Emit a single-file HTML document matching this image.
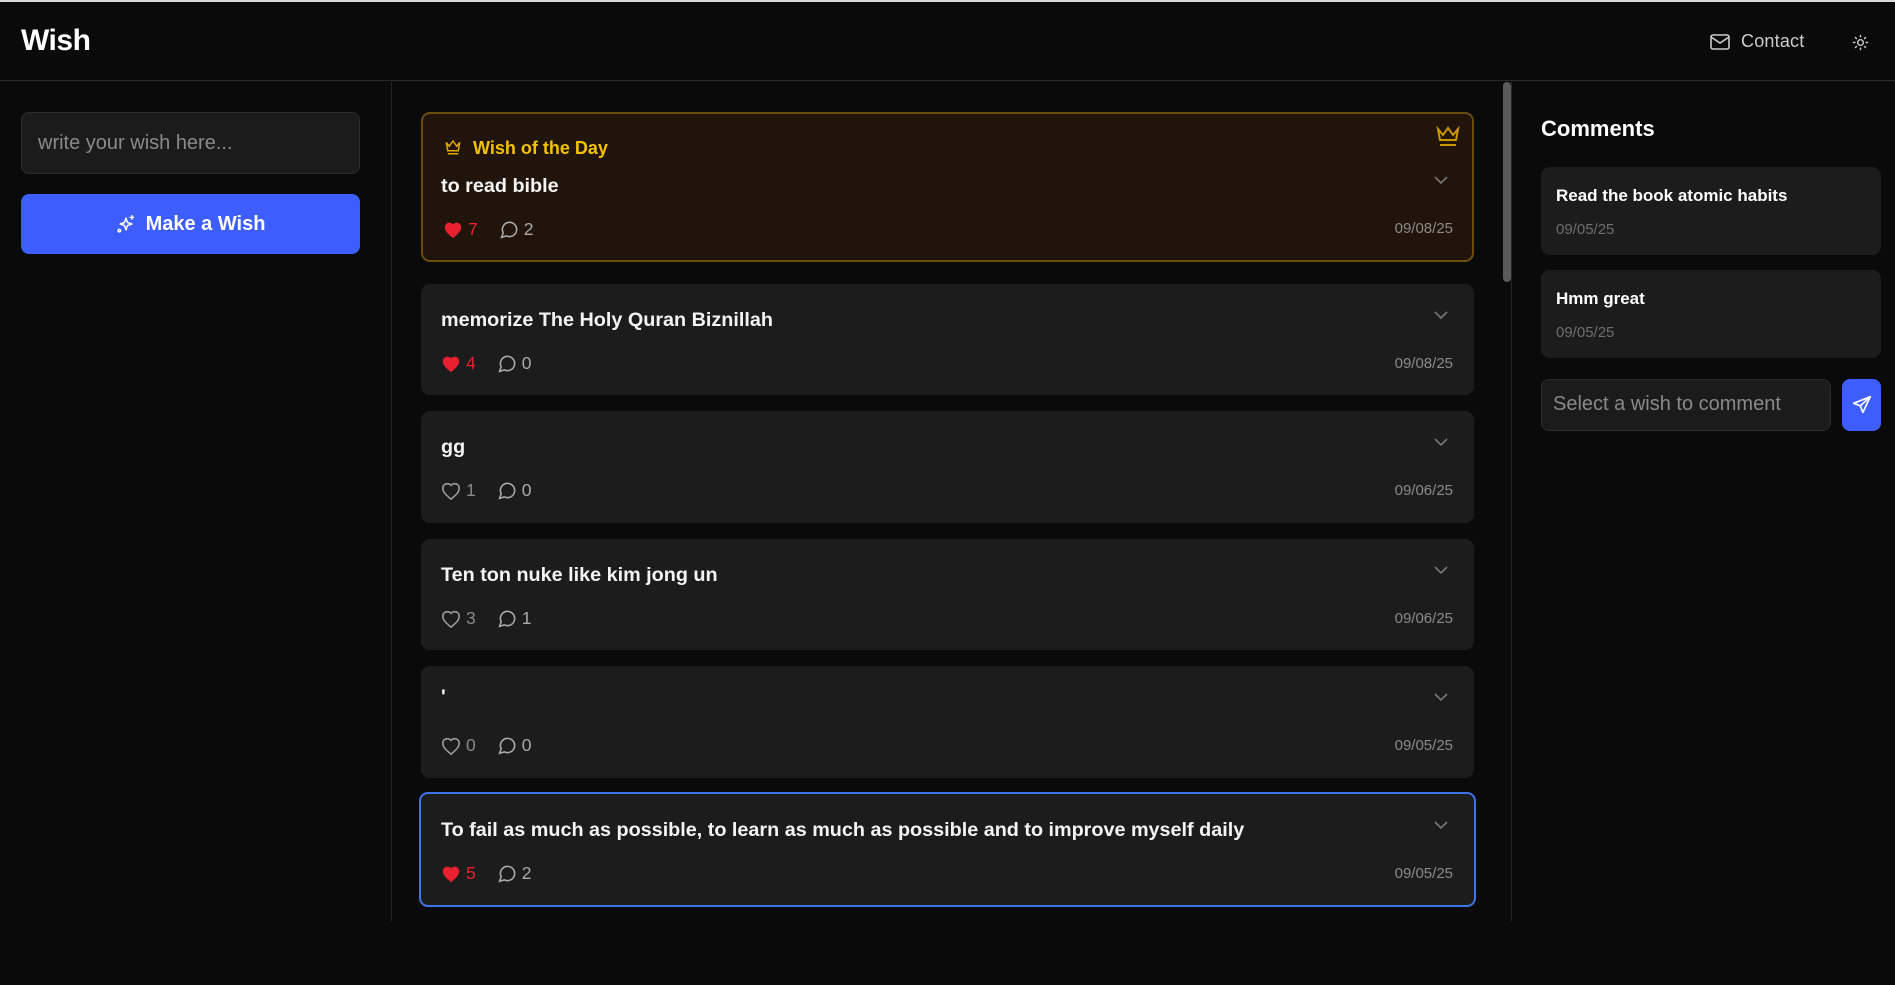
<!DOCTYPE html>
<html><head><meta charset="utf-8"><style>
*{box-sizing:border-box;margin:0;padding:0}
body{width:1895px;height:985px;background:#0a0a0a;font-family:"Liberation Sans",sans-serif;color:#fff;position:relative;overflow:hidden}
.top{position:absolute;left:0;top:0;width:1895px;height:2px;background:#d8d8d8}
.hdr{position:absolute;left:0;top:2px;width:1895px;height:79px;border-bottom:1px solid #2a2a2a}
.logo{position:absolute;left:21px;top:22px;font-size:30px;font-weight:bold;letter-spacing:-0.5px}
.contact{position:absolute;left:1710px;top:29px;font-size:18px;color:#ccc;display:flex;align-items:center;gap:11px;letter-spacing:0.2px}
.vl{position:absolute;top:82px;height:839px;width:1px;background:#262626}
.inp{position:absolute;left:21px;top:112px;width:339px;height:62px;background:#1b1b1b;border:1px solid #2c2c2c;border-radius:8px;color:#8a8a8a;font-size:20px;padding:19px 16px}
.btn{position:absolute;left:21px;top:194px;width:339px;height:60px;background:#3d5efc;border-radius:8px;font-size:20px;font-weight:bold;display:flex;align-items:center;justify-content:center;gap:10px}
.card{position:absolute;left:421px;width:1053px;background:#1c1c1c;border-radius:9px}
.t{position:absolute;left:20px;font-size:19.8px;font-weight:bold;color:#f4f4f4}
.meta{position:absolute;left:20px;display:flex;align-items:center;font-size:17.5px;gap:5px}
.date{position:absolute;right:21px;font-size:15px;color:#8a8a8a}
.chev{position:absolute;right:26px}
.red{color:#e8202f}.gr{color:#aaa}
.sb{position:absolute;left:1503px;top:82px;width:8px;height:200px;background:#5a5a5a;border-radius:4px}
.ch{position:absolute;left:1541px;width:340px;background:#1c1c1c;border-radius:9px}
.ch .a{position:absolute;left:15px;top:19px;font-size:17px;font-weight:bold}
.ch .b{position:absolute;left:15px;top:54px;font-size:15px;color:#6e6e6e}
</style></head><body>
<div class="top"></div>
<div class="hdr">
<div class="logo">Wish</div>
<div class="contact"><svg width="20" height="16" viewBox="0 0 20 16" fill="none" stroke="#ccc" stroke-width="1.6"><rect x="1" y="1" width="18" height="14" rx="2"/><path d="M1 3l9 6 9-6"/></svg>Contact</div>
<svg style="position:absolute;left:1852px;top:32px" width="17" height="17" viewBox="0 0 24 24" fill="none" stroke="#ccc" stroke-width="2" stroke-linecap="round"><circle cx="12" cy="12" r="4"/><path d="M12 2v2M12 20v2M4.9 4.9l1.4 1.4M17.7 17.7l1.4 1.4M2 12h2M20 12h2M4.9 19.1l1.4-1.4M17.7 6.3l1.4-1.4"/></svg>
</div>
<div class="vl" style="left:391px"></div>
<div class="vl" style="left:1511px"></div>
<div class="sb"></div>
<div class="inp">write your wish here...</div>
<div class="btn"><svg width="20" height="20" viewBox="0 0 24 24" fill="none" stroke="#fff" stroke-width="1.8" stroke-linecap="round" stroke-linejoin="round"><path d="M12 5l1.8 5.2L19 12l-5.2 1.8L12 19l-1.8-5.2L5 12l5.2-1.8z"/><path d="M19 2v4M17 4h4"/><circle cx="4" cy="20" r="1.5"/></svg>Make a Wish</div>

<div class="card" style="top:112px;height:150px;background:#21140b;border:2px solid #6a4c0c">
<svg style="position:absolute;left:21px;top:24px" width="18" height="18" viewBox="0 0 24 24" fill="none" stroke="#e0a800" stroke-width="2"><path d="M3 6l4 5 5-7 5 7 4-5-2 11H5z"/><path d="M5 21h14"/></svg>
<div style="position:absolute;left:50px;top:24px;font-size:18px;font-weight:bold;color:#f2c200">Wish of the Day</div>
<svg style="position:absolute;right:12px;top:12px" width="24" height="22" viewBox="0 0 24 22" fill="none" stroke="#c99700" stroke-width="2"><path d="M2 3l5 6 5-7 5 7 5-6-2 11H4z"/><path d="M4 19h16"/></svg>
<div class="t" style="top:61px;left:18px">to read bible</div>
<svg class="chev" style="top:62px;right:24px" width="14" height="9" viewBox="0 0 14 9" fill="none" stroke="#777" stroke-width="1.6"><path d="M1 1l6 6 6-6"/></svg>
<div class="meta" style="top:105px;left:20px"><svg width="20" height="18" viewBox="0 0 24 22"><path fill="#e8202f" d="M12 21l-1.5-1.3C5 15 2 12 2 7.5 2 4.4 4.4 2 7.5 2c1.7 0 3.4.8 4.5 2.1C13.1 2.8 14.8 2 16.5 2 19.6 2 22 4.4 22 7.5c0 4.5-3 7.5-8.5 12.2z"/></svg><span class="red">7</span><span style="width:12px"></span><svg width="19" height="19" viewBox="0 0 24 24" fill="none" stroke="#aaa" stroke-width="2"><path d="M7.9 20A9 9 0 1 0 4 16.1L2 22z"/></svg><span class="gr">2</span></div>
<div class="date" style="top:106px;right:19px">09/08/25</div>
</div>

<div class="card" style="top:284px;height:111px">
<div class="t" style="top:25px">memorize The Holy Quran Biznillah</div>
<svg class="chev" style="top:27px" width="14" height="9" viewBox="0 0 14 9" fill="none" stroke="#777" stroke-width="1.6"><path d="M1 1l6 6 6-6"/></svg>
<div class="meta" style="top:69px"><svg width="20" height="18" viewBox="0 0 24 22"><path fill="#e8202f" d="M12 21l-1.5-1.3C5 15 2 12 2 7.5 2 4.4 4.4 2 7.5 2c1.7 0 3.4.8 4.5 2.1C13.1 2.8 14.8 2 16.5 2 19.6 2 22 4.4 22 7.5c0 4.5-3 7.5-8.5 12.2z"/></svg><span class="red">4</span><span style="width:12px"></span><svg width="19" height="19" viewBox="0 0 24 24" fill="none" stroke="#aaa" stroke-width="2"><path d="M7.9 20A9 9 0 1 0 4 16.1L2 22z"/></svg><span class="gr">0</span></div>
<div class="date" style="top:71px">09/08/25</div>
</div>

<div class="card" style="top:411px;height:112px">
<div class="t" style="top:25px">gg</div>
<svg class="chev" style="top:27px" width="14" height="9" viewBox="0 0 14 9" fill="none" stroke="#777" stroke-width="1.6"><path d="M1 1l6 6 6-6"/></svg>
<div class="meta" style="top:69px"><svg width="20" height="18" viewBox="0 0 24 22" fill="none" stroke="#999" stroke-width="2"><path d="M12 21l-1.5-1.3C5 15 2 12 2 7.5 2 4.4 4.4 2 7.5 2c1.7 0 3.4.8 4.5 2.1C13.1 2.8 14.8 2 16.5 2 19.6 2 22 4.4 22 7.5c0 4.5-3 7.5-8.5 12.2z"/></svg><span style="color:#888">1</span><span style="width:12px"></span><svg width="19" height="19" viewBox="0 0 24 24" fill="none" stroke="#aaa" stroke-width="2"><path d="M7.9 20A9 9 0 1 0 4 16.1L2 22z"/></svg><span class="gr">0</span></div>
<div class="date" style="top:71px">09/06/25</div>
</div>

<div class="card" style="top:539px;height:111px">
<div class="t" style="top:25px">Ten ton nuke like kim jong un</div>
<svg class="chev" style="top:27px" width="14" height="9" viewBox="0 0 14 9" fill="none" stroke="#777" stroke-width="1.6"><path d="M1 1l6 6 6-6"/></svg>
<div class="meta" style="top:69px"><svg width="20" height="18" viewBox="0 0 24 22" fill="none" stroke="#999" stroke-width="2"><path d="M12 21l-1.5-1.3C5 15 2 12 2 7.5 2 4.4 4.4 2 7.5 2c1.7 0 3.4.8 4.5 2.1C13.1 2.8 14.8 2 16.5 2 19.6 2 22 4.4 22 7.5c0 4.5-3 7.5-8.5 12.2z"/></svg><span style="color:#888">3</span><span style="width:12px"></span><svg width="19" height="19" viewBox="0 0 24 24" fill="none" stroke="#aaa" stroke-width="2"><path d="M7.9 20A9 9 0 1 0 4 16.1L2 22z"/></svg><span class="gr">1</span></div>
<div class="date" style="top:71px">09/06/25</div>
</div>

<div class="card" style="top:666px;height:112px">
<div class="t" style="top:20px">'</div>
<svg class="chev" style="top:27px" width="14" height="9" viewBox="0 0 14 9" fill="none" stroke="#777" stroke-width="1.6"><path d="M1 1l6 6 6-6"/></svg>
<div class="meta" style="top:69px"><svg width="20" height="18" viewBox="0 0 24 22" fill="none" stroke="#999" stroke-width="2"><path d="M12 21l-1.5-1.3C5 15 2 12 2 7.5 2 4.4 4.4 2 7.5 2c1.7 0 3.4.8 4.5 2.1C13.1 2.8 14.8 2 16.5 2 19.6 2 22 4.4 22 7.5c0 4.5-3 7.5-8.5 12.2z"/></svg><span style="color:#888">0</span><span style="width:12px"></span><svg width="19" height="19" viewBox="0 0 24 24" fill="none" stroke="#aaa" stroke-width="2"><path d="M7.9 20A9 9 0 1 0 4 16.1L2 22z"/></svg><span class="gr">0</span></div>
<div class="date" style="top:71px">09/05/25</div>
</div>

<div class="card" style="top:792px;height:115px;left:419px;width:1057px;border:2px solid #3f74e8">
<div class="t" style="top:25px">To fail as much as possible, to learn as much as possible and to improve myself daily</div>
<svg class="chev" style="top:27px" width="14" height="9" viewBox="0 0 14 9" fill="none" stroke="#777" stroke-width="1.6"><path d="M1 1l6 6 6-6"/></svg>
<div class="meta" style="top:69px"><svg width="20" height="18" viewBox="0 0 24 22"><path fill="#e8202f" d="M12 21l-1.5-1.3C5 15 2 12 2 7.5 2 4.4 4.4 2 7.5 2c1.7 0 3.4.8 4.5 2.1C13.1 2.8 14.8 2 16.5 2 19.6 2 22 4.4 22 7.5c0 4.5-3 7.5-8.5 12.2z"/></svg><span class="red">5</span><span style="width:12px"></span><svg width="19" height="19" viewBox="0 0 24 24" fill="none" stroke="#aaa" stroke-width="2"><path d="M7.9 20A9 9 0 1 0 4 16.1L2 22z"/></svg><span class="gr">2</span></div>
<div class="date" style="top:71px">09/05/25</div>
</div>

<div style="position:absolute;left:1541px;top:116px;font-size:22px;font-weight:bold">Comments</div>
<div class="ch" style="top:167px;height:88px"><div class="a">Read the book atomic habits</div><div class="b">09/05/25</div></div>
<div class="ch" style="top:270px;height:88px"><div class="a">Hmm great</div><div class="b">09/05/25</div></div>
<div style="position:absolute;left:1541px;top:379px;width:290px;height:52px;background:#1b1b1b;border:1px solid #2c2c2c;border-radius:8px;font-size:20px;color:#8a8a8a;padding:13px 11px">Select a wish to comment</div>
<div style="position:absolute;left:1842px;top:379px;width:39px;height:52px;background:#3d5efc;border-radius:8px;display:flex;align-items:center;justify-content:center"><svg width="20" height="20" viewBox="0 0 24 24" fill="none" stroke="#fff" stroke-width="2" stroke-linejoin="round"><path d="M22 2L2 10l8 3 3 8z"/><path d="M10 13l12-11"/></svg></div>
</body></html>
